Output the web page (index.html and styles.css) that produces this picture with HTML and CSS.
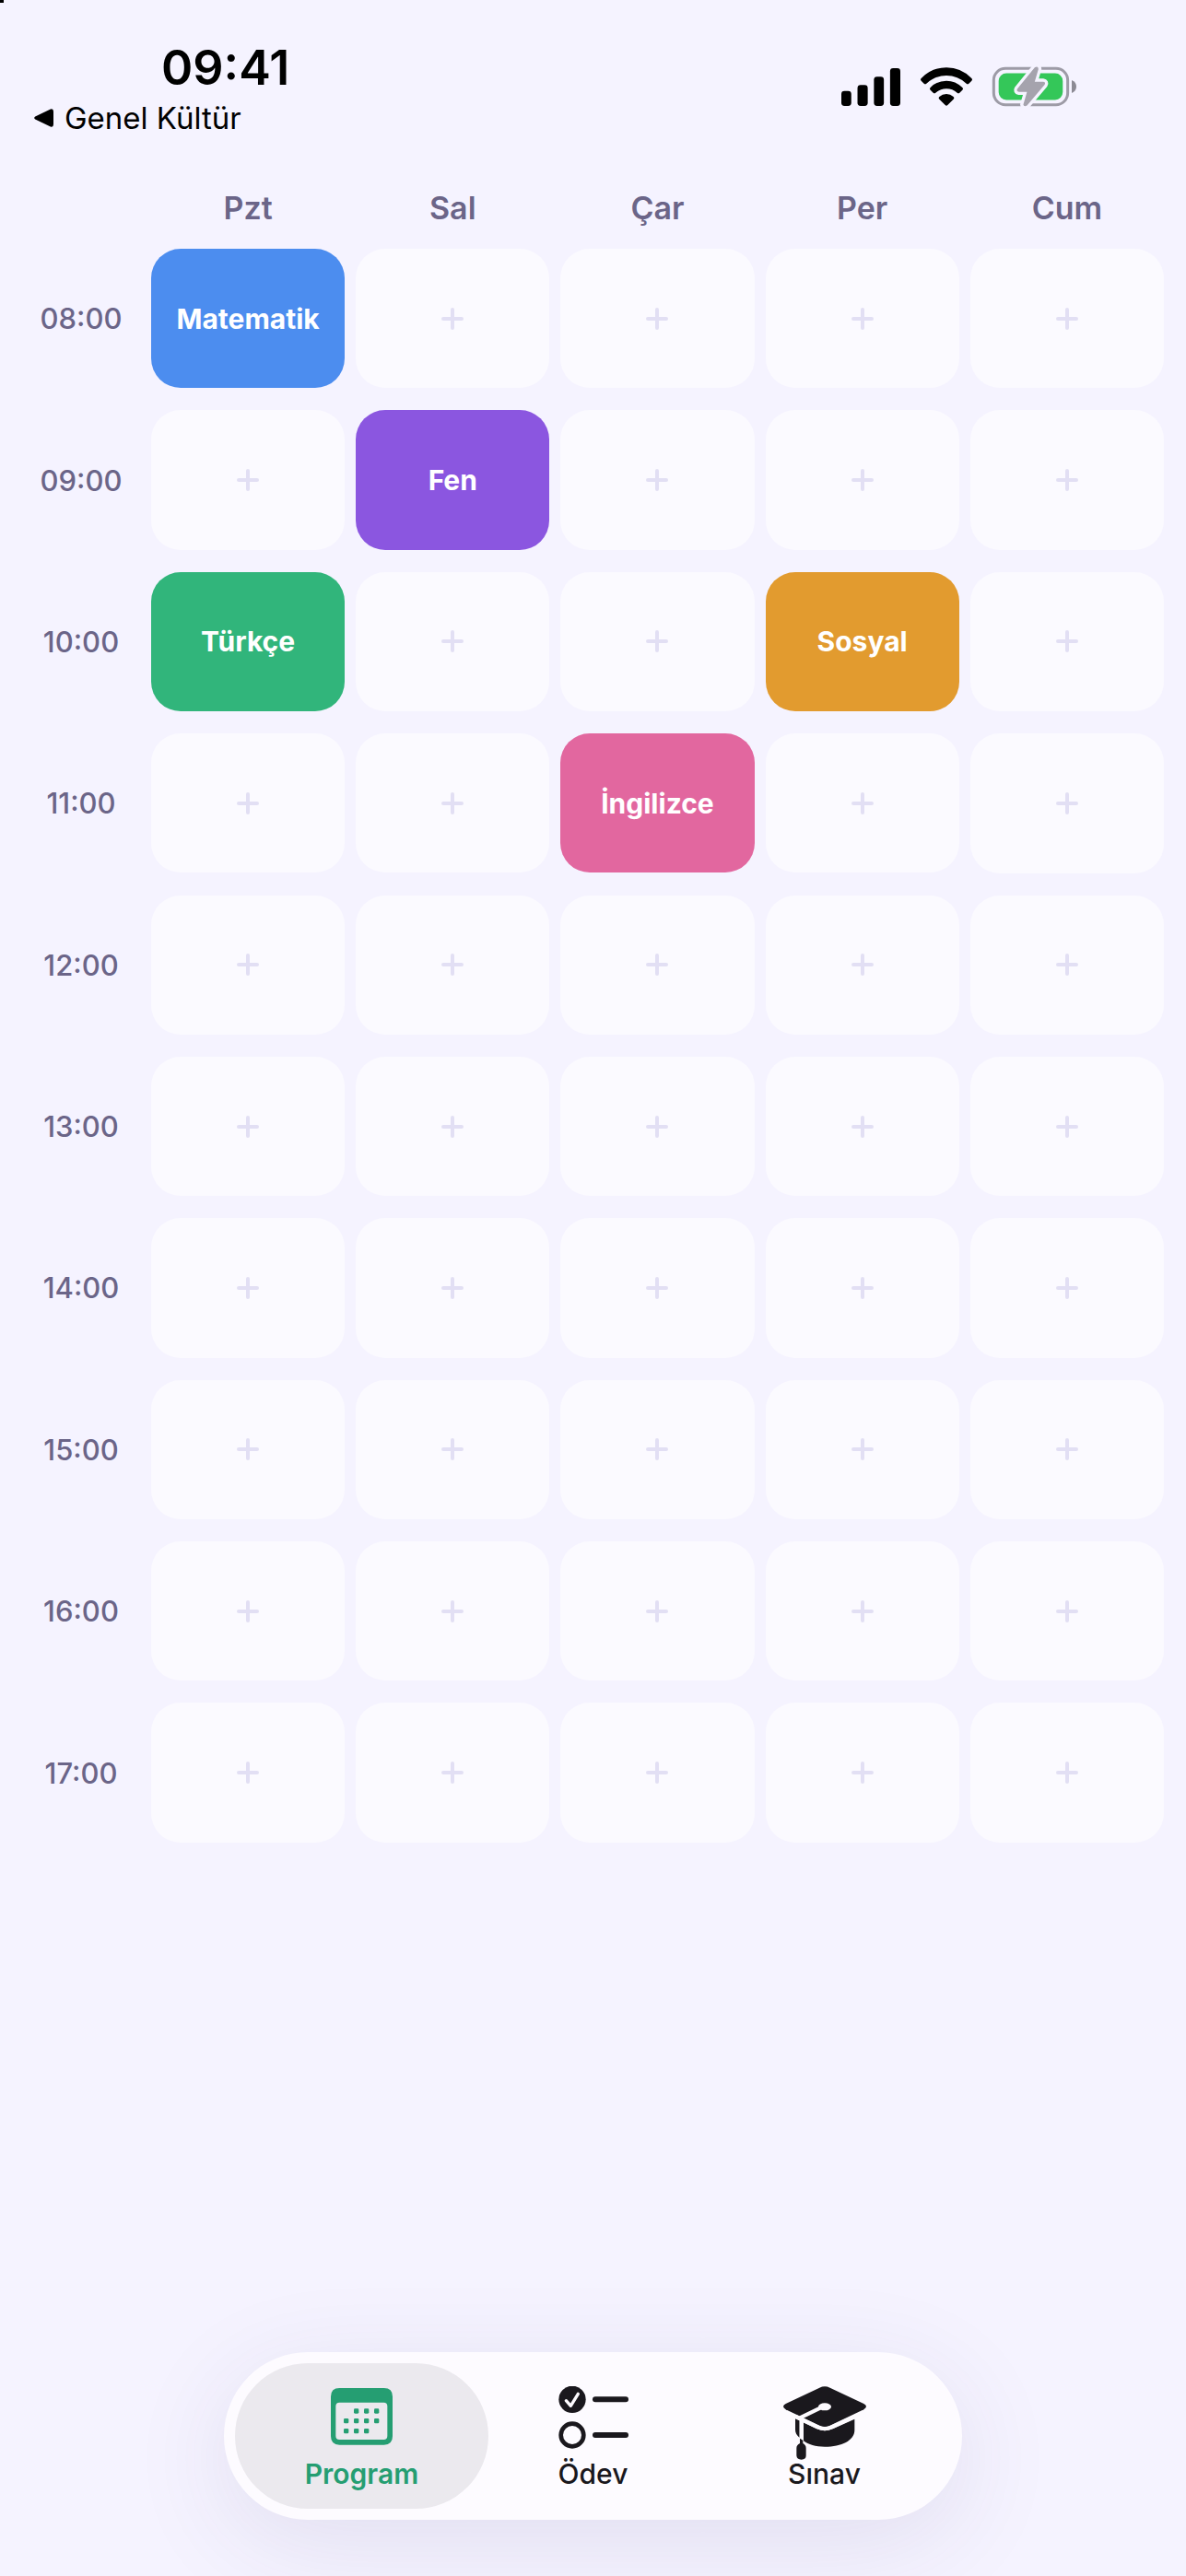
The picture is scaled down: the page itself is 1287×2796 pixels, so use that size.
FILE: index.html
```html
<!DOCTYPE html>
<html lang="tr">

<head>
  <meta charset="UTF-8">
  <meta name="viewport" content="width=device-width, initial-scale=1.0">
  <title>Ders Programı</title>
  <link rel="stylesheet" href="styles.css">
</head>

<body>
  <header class="status-bar">
    <div class="status-left">
      <time class="clock">09:41</time>
      <a href="#" class="back-link">
        <svg class="back-arrow" viewBox="0 0 21 20">
          <path d="M1.2 8.6 17.8 0.6Q21 -0.4 21 3V17Q21 20.4 17.8 19.4L1.2 11.6Q-0.8 10.1 1.2 8.6Z" />
        </svg>
        Genel Kültür
      </a>
    </div>
    <div class="status-icons">
      <svg class="signal" viewBox="0 0 190 121">
        <rect x="0" y="73" width="32" height="48" rx="10" />
        <rect x="52" y="54" width="33" height="67" rx="10" />
        <rect x="105" y="27" width="32" height="94" rx="10" />
        <rect x="157" y="0" width="33" height="121" rx="10" />
      </svg>
      <svg class="wifi" viewBox="0 0 168 124">
        <path d="M2 35Q36 0 84 0T166 35Q170 39 166 43L157 52Q153 56 149 52Q121 26 84 26T19 52Q15 56 11 52L2 43Q-2 39 2 35Z" />
        <path d="M32 65Q54 43 84 43T136 65Q140 69 136 73L127 82Q123 86 119 82Q104 69 84 69T49 82Q45 86 41 82L32 73Q28 69 32 65Z" />
        <path d="M61 95Q71 86 84 86T107 95Q111 99 107 103L88 122Q84 126 80 122L61 103Q57 99 61 95Z" />
      </svg>
      <svg class="battery" viewBox="0 0 272 130">
        <rect class="battery-shell" x="4" y="6" width="240" height="118" rx="38" />
        <path class="battery-cap" d="M257 44Q272 50 272 65T257 86Z" />
        <rect class="battery-level" x="20" y="22" width="208" height="86" rx="25" />
        <path class="battery-bolt-gap" d="M137 3 81 72Q76 80 86 82H112L100 123Q102 132 112 126L169 59Q174 50 164 49H137L149 8Q148 -3 137 3Z" />
        <path class="battery-bolt" d="M137 3 81 72Q76 80 86 82H112L100 123Q102 132 112 126L169 59Q174 50 164 49H137L149 8Q148 -3 137 3Z" />
      </svg>
    </div>
  </header>

  <main class="schedule">
    <table class="timetable">
      <thead>
        <tr>
          <td class="corner"></td>
          <th scope="col">Pzt</th>
          <th scope="col">Sal</th>
          <th scope="col">Çar</th>
          <th scope="col">Per</th>
          <th scope="col">Cum</th>
        </tr>
      </thead>
      <tbody>
        <tr>
          <th scope="row">08:00</th>
          <td><button class="slot math">Matematik</button></td>
          <td><button class="slot empty" aria-label="Ders ekle"></button></td>
          <td><button class="slot empty" aria-label="Ders ekle"></button></td>
          <td><button class="slot empty" aria-label="Ders ekle"></button></td>
          <td><button class="slot empty" aria-label="Ders ekle"></button></td>
        </tr>
        <tr>
          <th scope="row">09:00</th>
          <td><button class="slot empty" aria-label="Ders ekle"></button></td>
          <td><button class="slot science">Fen</button></td>
          <td><button class="slot empty" aria-label="Ders ekle"></button></td>
          <td><button class="slot empty" aria-label="Ders ekle"></button></td>
          <td><button class="slot empty" aria-label="Ders ekle"></button></td>
        </tr>
        <tr>
          <th scope="row">10:00</th>
          <td><button class="slot turkish">Türkçe</button></td>
          <td><button class="slot empty" aria-label="Ders ekle"></button></td>
          <td><button class="slot empty" aria-label="Ders ekle"></button></td>
          <td><button class="slot social">Sosyal</button></td>
          <td><button class="slot empty" aria-label="Ders ekle"></button></td>
        </tr>
        <tr>
          <th scope="row">11:00</th>
          <td><button class="slot empty" aria-label="Ders ekle"></button></td>
          <td><button class="slot empty" aria-label="Ders ekle"></button></td>
          <td><button class="slot english">İngilizce</button></td>
          <td><button class="slot empty" aria-label="Ders ekle"></button></td>
          <td><button class="slot empty" aria-label="Ders ekle"></button></td>
        </tr>
        <tr>
          <th scope="row">12:00</th>
          <td><button class="slot empty" aria-label="Ders ekle"></button></td>
          <td><button class="slot empty" aria-label="Ders ekle"></button></td>
          <td><button class="slot empty" aria-label="Ders ekle"></button></td>
          <td><button class="slot empty" aria-label="Ders ekle"></button></td>
          <td><button class="slot empty" aria-label="Ders ekle"></button></td>
        </tr>
        <tr>
          <th scope="row">13:00</th>
          <td><button class="slot empty" aria-label="Ders ekle"></button></td>
          <td><button class="slot empty" aria-label="Ders ekle"></button></td>
          <td><button class="slot empty" aria-label="Ders ekle"></button></td>
          <td><button class="slot empty" aria-label="Ders ekle"></button></td>
          <td><button class="slot empty" aria-label="Ders ekle"></button></td>
        </tr>
        <tr>
          <th scope="row">14:00</th>
          <td><button class="slot empty" aria-label="Ders ekle"></button></td>
          <td><button class="slot empty" aria-label="Ders ekle"></button></td>
          <td><button class="slot empty" aria-label="Ders ekle"></button></td>
          <td><button class="slot empty" aria-label="Ders ekle"></button></td>
          <td><button class="slot empty" aria-label="Ders ekle"></button></td>
        </tr>
        <tr>
          <th scope="row">15:00</th>
          <td><button class="slot empty" aria-label="Ders ekle"></button></td>
          <td><button class="slot empty" aria-label="Ders ekle"></button></td>
          <td><button class="slot empty" aria-label="Ders ekle"></button></td>
          <td><button class="slot empty" aria-label="Ders ekle"></button></td>
          <td><button class="slot empty" aria-label="Ders ekle"></button></td>
        </tr>
        <tr>
          <th scope="row">16:00</th>
          <td><button class="slot empty" aria-label="Ders ekle"></button></td>
          <td><button class="slot empty" aria-label="Ders ekle"></button></td>
          <td><button class="slot empty" aria-label="Ders ekle"></button></td>
          <td><button class="slot empty" aria-label="Ders ekle"></button></td>
          <td><button class="slot empty" aria-label="Ders ekle"></button></td>
        </tr>
        <tr>
          <th scope="row">17:00</th>
          <td><button class="slot empty" aria-label="Ders ekle"></button></td>
          <td><button class="slot empty" aria-label="Ders ekle"></button></td>
          <td><button class="slot empty" aria-label="Ders ekle"></button></td>
          <td><button class="slot empty" aria-label="Ders ekle"></button></td>
          <td><button class="slot empty" aria-label="Ders ekle"></button></td>
        </tr>
      </tbody>
    </table>
  </main>

  <nav class="tab-bar">
    <a href="#" class="tab active" aria-current="page">
      <svg class="tab-icon" viewBox="0 0 201 240">
        <path fill-rule="evenodd" d="M28 6H173Q201 6 201 34V163Q201 191 173 191H28Q0 191 0 163V34Q0 6 28 6ZM28 53Q16 53 16 65V162Q16 174 28 174H172Q184 174 184 162V65Q184 53 172 53Z" />
        <g>
          <rect x="75" y="73" width="16" height="16" rx="4" />
          <rect x="108" y="73" width="16" height="16" rx="4" />
          <rect x="141" y="73" width="16" height="16" rx="4" />
          <rect x="42" y="105" width="16" height="16" rx="4" />
          <rect x="75" y="105" width="16" height="16" rx="4" />
          <rect x="108" y="105" width="16" height="16" rx="4" />
          <rect x="141" y="105" width="16" height="16" rx="4" />
          <rect x="42" y="138" width="16" height="16" rx="4" />
          <rect x="75" y="138" width="16" height="16" rx="4" />
          <rect x="108" y="138" width="16" height="16" rx="4" />
        </g>
      </svg>
      <span>Program</span>
    </a>
    <a href="#" class="tab">
      <svg class="tab-icon" viewBox="0 0 228 240">
        <circle cx="45" cy="43" r="44" />
        <path class="check" d="M25 47 40 64 64 25" />
        <rect x="111" y="34" width="117" height="18" rx="9" />
        <circle class="ring" cx="45" cy="159" r="37" />
        <rect x="111" y="150" width="117" height="18" rx="9" />
      </svg>
      <span>Ödev</span>
    </a>
    <a href="#" class="tab">
      <svg class="tab-icon" viewBox="0 0 270 240">
        <path d="M39 106 107 138Q135 151 163 138L232 107V143C232 176 190 197 135 197C105 197 82 190 66 178V118L53 112V168C43 160 39 151 39 142Z" />
        <path d="M8 57 118 5Q135 -3 152 5L262 57Q278 66 262 76L152 128Q135 136 118 128L8 76Q-8 66 8 57Z" />
        <path class="brim" d="M39 98 112 133Q135 144 158 133L238 96" />
        <path class="cord" d="M54 103 122 70" />
        <ellipse class="knot" cx="135" cy="67" rx="21" ry="12" />
        <path class="cord" d="M59 102V172" />
        <path d="M54 170 64 176V186Q74 191 74 202V226Q74 239 59 239T43 226V202Q43 191 54 186Z" />
      </svg>
      <span>Sınav</span>
    </a>
  </nav>
</body>

</html>
```
FILE: styles.css
```css
/* Base Styles */
* {
  box-sizing: border-box;
}

body {
  margin: 0;
  min-height: 100vh;
  display: flex;
  flex-direction: column;
  position: relative;
  overflow-x: hidden;
  font-family: Inter, "Liberation Sans", sans-serif;
  background: #f5f3ff;
  color: #000;
}

/* Screen corner mark */
body::before {
  content: "";
  position: absolute;
  top: 0;
  left: 0;
  width: 4px;
  height: 3px;
  background: #000;
}

a {
  color: inherit;
  text-decoration: none;
}

svg {
  display: block;
  fill: currentColor;
}

/* Status Bar */
.status-bar {
  display: flex;
  align-items: flex-start;
  justify-content: space-between;
  padding: 44px 119px 33px 37px;
}

.clock {
  display: block;
  padding-left: 138px;
  font-size: 52px;
  font-weight: 600;
  line-height: 60px;
}

.back-link {
  display: flex;
  align-items: center;
  gap: 12px;
  margin-top: 4px;
  font-size: 33px;
  line-height: 40px;
}

.back-arrow {
  width: 21px;
  height: 20px;
}

.status-icons {
  display: flex;
  align-items: center;
  gap: 22px;
  height: 100px;
}

.signal {
  width: 64px;
  height: 41px;
}

.wifi {
  width: 56px;
  height: 42px;
}

.battery {
  width: 91px;
  height: 44px;
  overflow: visible;
}

.battery-shell {
  fill: none;
  stroke: #9d9ba6;
  stroke-width: 9;
}

.battery-cap {
  fill: #8c8a94;
}

.battery-level {
  fill: #34c759;
}

.battery-bolt {
  fill: #a5a3ad;
}

.battery-bolt-gap {
  fill: #f5f3ff;
  stroke: #f5f3ff;
  stroke-width: 20;
}

/* Timetable */
.schedule {
  padding: 0 12px;
}

.timetable {
  width: 100%;
  table-layout: fixed;
  border-collapse: separate;
  border-spacing: 12px 24px;
}

.timetable td,
.timetable th {
  padding: 0;
  color: #6b6588;
}

.corner {
  width: 128px;
}

.timetable thead th {
  font-size: 34px;
  font-weight: 600;
  line-height: 41px;
}

.timetable tbody th {
  font-size: 31px;
  font-weight: 500;
}

.slot {
  display: flex;
  align-items: center;
  justify-content: center;
  position: relative;
  width: 100%;
  aspect-ratio: 25 / 18;
  padding: 0;
  border: none;
  border-radius: 32px;
  font-family: inherit;
  font-size: 30px;
  font-weight: 700;
  color: #fff;
  cursor: pointer;
}

.slot.empty {
  background: #fbfaff;
}

/* Plus sign */
.slot.empty::before,
.slot.empty::after {
  content: "";
  position: absolute;
  width: 24px;
  height: 4px;
  border-radius: 2px;
  background: #e2dff4;
}

.slot.empty::after {
  transform: rotate(90deg);
}

.slot.math {
  background: #4c8def;
}

.slot.science {
  background: #8b56e0;
}

.slot.turkish {
  background: #31b57b;
}

.slot.social {
  background: #e29b2f;
}

.slot.english {
  background: #e2679f;
}

/* Tab Bar */
.tab-bar {
  display: flex;
  align-self: center;
  margin-top: auto;
  margin-bottom: 61px;
  padding: 12px;
  border-radius: 91px;
  background: #fdfbff;
  box-shadow: 0 24px 110px rgba(60, 50, 110, 0.1);
}

.tab {
  display: flex;
  flex-direction: column;
  align-items: center;
  width: 275px;
  padding: 25px 0 23px;
  border-radius: 79px;
  font-size: 30px;
  font-weight: 500;
  line-height: 30px;
  color: #1a181d;
}

.tab + .tab {
  margin-left: -24px;
}

.tab.active {
  background: #ebe9ee;
  color: #259e72;
  font-weight: 600;
}

.tab-icon {
  height: 80px;
}

.check {
  fill: none;
  stroke: #fdfbff;
  stroke-width: 10;
  stroke-linecap: round;
  stroke-linejoin: round;
}

.ring {
  fill: none;
  stroke: currentColor;
  stroke-width: 14;
}

.cord,
.brim {
  fill: none;
  stroke: #fdfbff;
  stroke-width: 12;
}

.knot {
  fill: #fdfbff;
}
```
